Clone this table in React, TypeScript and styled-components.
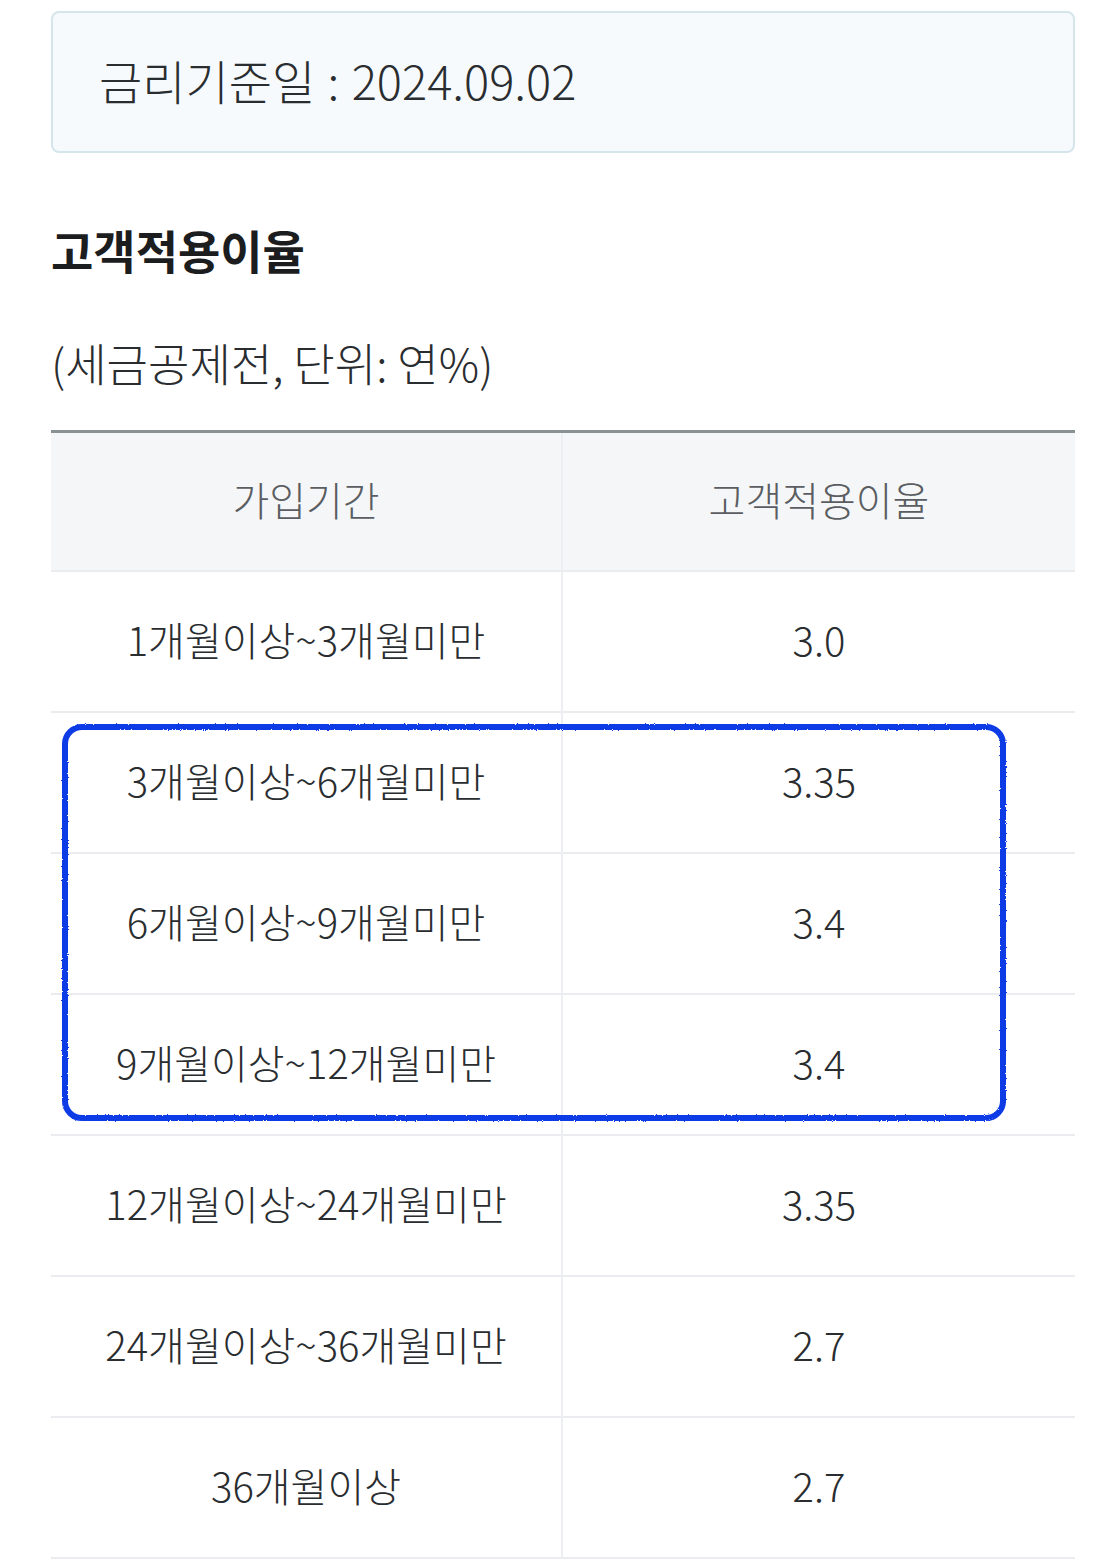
import React from 'react';
import styled, { createGlobalStyle } from 'styled-components';

const GlobalStyle = createGlobalStyle`
  body {
    margin: 0;
    background: #ffffff;
    font-family: "Noto Sans CJK KR", "Noto Sans", sans-serif;
    color: #222;
  }
`;

const Page = styled.div`
  width: 1024px;
  margin-left: 51px;
  padding-top: 11px;
  padding-bottom: 4px;
`;

const DateBox = styled.div`
  height: 142px;
  box-sizing: border-box;
  border: 2px solid #d4e5eb;
  border-radius: 8px;
  background: #f6fafd;
  display: flex;
  align-items: center;
  padding: 0 0 5px 46px;
  font-size: 47px;
  font-weight: 300;
  color: #2a2d30;
  word-spacing: 2px;
`;

const Heading = styled.h2`
  margin: 68px 0 0;
  font-size: 46px;
  font-weight: 700;
  color: #1c1d1f;
  line-height: 56px;
`;

const Unit = styled.p`
  margin: 58px 0 0;
  font-size: 45px;
  font-weight: 300;
  color: #2a2d30;
  line-height: 56px;
`;

const TableWrap = styled.div`
  position: relative;
  margin-top: 39px;
`;

const Table = styled.div`
  border-top: 3px solid #8a9194;
  display: grid;
  grid-template-columns: 512px 1fr;
`;

const Cell = styled.div<{ $head?: boolean; $left?: boolean }>`
  height: ${({ $head }) => ($head ? '139px' : '141px')};
  box-sizing: border-box;
  padding-bottom: 6px;
  display: flex;
  align-items: center;
  justify-content: center;
  border-bottom: 2px solid #eaecef;
  border-right: ${({ $left }) => ($left ? '2px solid #eceef1' : 'none')};
  background: ${({ $head }) => ($head ? '#f5f6f8' : '#ffffff')};
  color: ${({ $head }) => ($head ? '#5a5d61' : '#2a2d30')};
  font-size: 40px;
  font-weight: 300;
`;

const Highlight = styled.div`
  position: absolute;
  left: 11px;
  top: 294px;
  width: 944px;
  height: 397px;
  box-sizing: border-box;
  border: 6px solid #0d3be6;
  border-radius: 20px;
  pointer-events: none;
  filter: url(#marker-rough);
`;

const FilterDefs = styled.svg`
  position: absolute;
  width: 0;
  height: 0;
`;

const rows = [
  ['1개월이상~3개월미만', '3.0'],
  ['3개월이상~6개월미만', '3.35'],
  ['6개월이상~9개월미만', '3.4'],
  ['9개월이상~12개월미만', '3.4'],
  ['12개월이상~24개월미만', '3.35'],
  ['24개월이상~36개월미만', '2.7'],
  ['36개월이상', '2.7'],
];

export default function App() {
  return (
    <Page>
      <GlobalStyle />
      <FilterDefs aria-hidden="true">
        <filter id="marker-rough">
          <feTurbulence type="fractalNoise" baseFrequency="0.9" numOctaves="2" seed="3" />
          <feDisplacementMap in="SourceGraphic" scale="2.5" />
        </filter>
      </FilterDefs>
      <DateBox>금리기준일 : 2024.09.02</DateBox>
      <Heading>고객적용이율</Heading>
      <Unit>(세금공제전, 단위: 연%)</Unit>
      <TableWrap>
        <Table>
          <Cell $head $left>가입기간</Cell>
          <Cell $head>고객적용이율</Cell>
          {rows.map(([term, rate]) => (
            <React.Fragment key={term}>
              <Cell $left>{term}</Cell>
              <Cell>{rate}</Cell>
            </React.Fragment>
          ))}
        </Table>
        <Highlight />
      </TableWrap>
    </Page>
  );
}
